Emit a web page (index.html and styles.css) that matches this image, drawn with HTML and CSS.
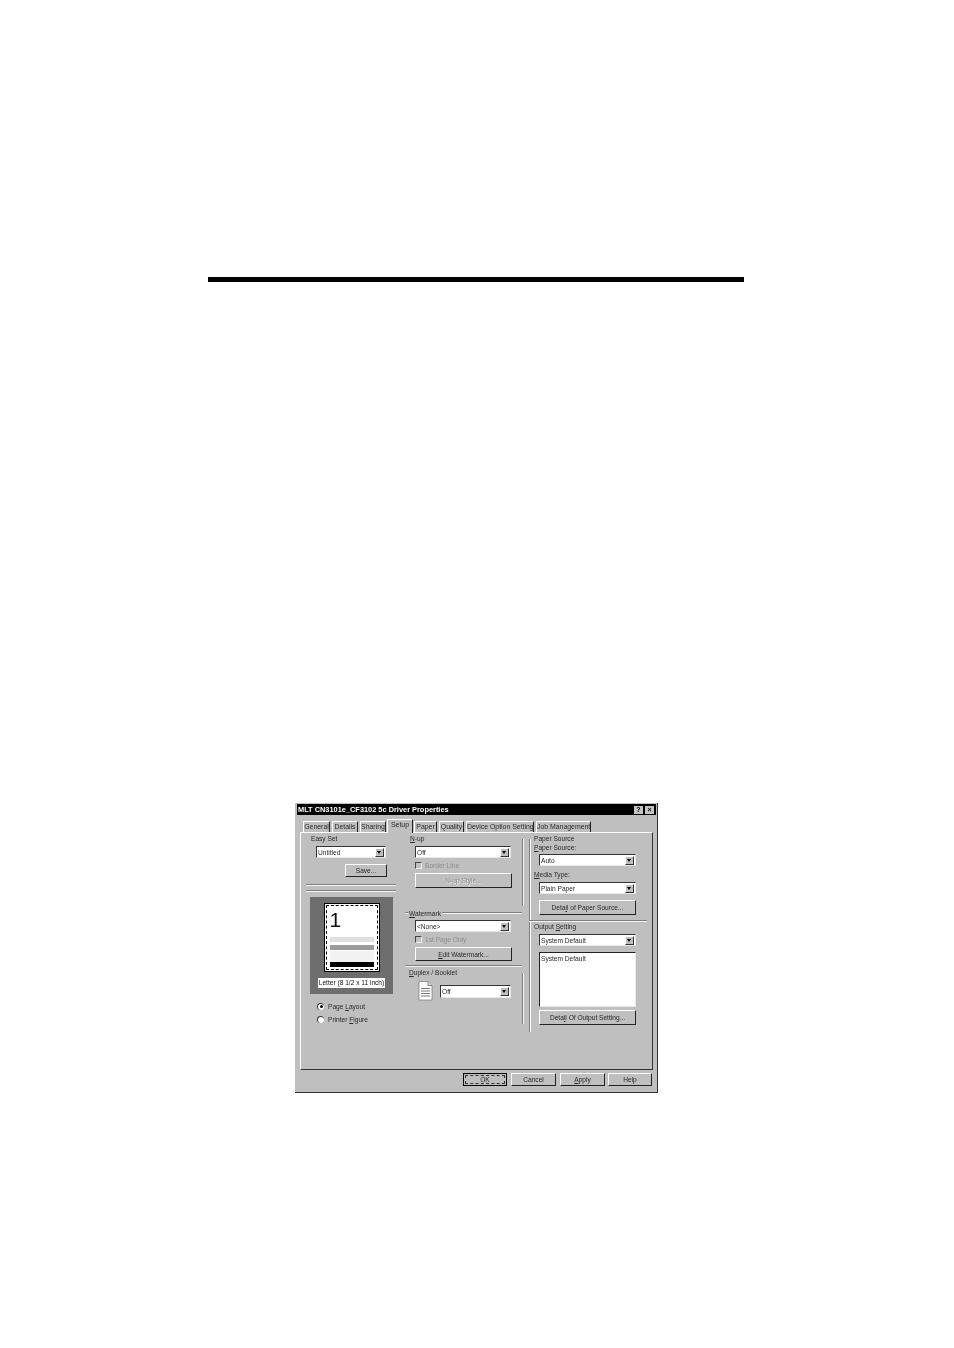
FILE: index.html
```html
<!DOCTYPE html>
<html lang="en">
<head>
<meta charset="utf-8">
<title>Driver Properties</title>
<link rel="stylesheet" href="styles.css">
</head>
<body>
<div class="rule"></div>
<div class="dialog">
  <div class="titlebar">
    <span class="title">MLT CN3101e_CF3102 5c Driver Properties</span>
    <span class="tbtn">?</span>
    <span class="tbtn tbtn-x">×</span>
  </div>
  <div class="tabs">
    <span class="tab w-general">General</span>
    <span class="tab w-details">Details</span>
    <span class="tab w-sharing">Sharing</span>
    <span class="tab active w-setup">Setup</span>
    <span class="tab w-paper">Paper</span>
    <span class="tab w-quality">Quality</span>
    <span class="tab w-device">Device Option Setting</span>
    <span class="tab w-job">Job Management</span>
  </div>
  <div class="panel">
    <div class="col-left">
      <div class="label">Easy Set</div>
      <div class="select s-easy"><span class="val">Untitled</span><span class="arrow"></span></div>
      <div class="btn b-save">Save...</div>
      <div class="groove g1"></div>
      <div class="groove g2"></div>
      <div class="preview">
        <div class="page">
          <div class="page-in">
            <span class="num">1</span>
            <i class="bar bar-a"></i>
            <i class="bar bar-b"></i>
            <i class="bar bar-c"></i>
            <i class="bar bar-d"></i>
          </div>
        </div>
        <div class="paperlabel">Letter (8 1/2 x 11 inch)</div>
      </div>
      <div class="radio r1"><span class="dot on"></span><span>Page <u>L</u>ayout</span></div>
      <div class="radio"><span class="dot"></span><span>Printer <u>F</u>igure</span></div>
    </div>
    <div class="col-mid">
      <div class="label"><u>N</u>-up</div>
      <div class="select s-mid"><span class="val">Off</span><span class="arrow"></span></div>
      <div class="check"><span class="box"></span><span>Border Line</span></div>
      <div class="btn b-mid dis">N-up Style...</div>
      <div class="groupline"><span><u>W</u>atermark</span></div>
      <div class="select s-mid s-after-group"><span class="val">&lt;None&gt;</span><span class="arrow"></span></div>
      <div class="check"><span class="box"></span><span>1st Page Only</span></div>
      <div class="btn b-edit"><span><u>E</u>dit Watermark...</span></div>
      <div class="groove g3"></div>
      <div class="label l-duplex"><u>D</u>uplex / Booklet</div>
      <div class="duplex">
        <svg class="docicon" width="15" height="20" viewBox="0 0 15 20">
          <path d="M1 .5H10L14 4.5V19H1Z" fill="#fff" stroke="#777" stroke-width=".7"/>
          <path d="M10 .5V4.5H14" fill="#ddd" stroke="#555" stroke-width=".7"/>
          <path d="M3 7.5H12M3 10H12M3 12.5H12M3 15H12" stroke="#555" stroke-width=".8"/>
        </svg>
        <div class="select s-dup"><span class="val">Off</span><span class="arrow"></span></div>
      </div>
    </div>
    <div class="col-lines">
      <div class="vline v1"></div>
      <div class="vline v2"></div>
    </div>
    <div class="col-right">
      <div class="rlabel">Paper Source</div>
      <div class="rlabel"><u>P</u>aper Source:</div>
      <div class="select s-right sp2"><span class="val">Auto</span><span class="arrow"></span></div>
      <div class="rlabel sp4"><u>M</u>edia Type:</div>
      <div class="select s-right"><span class="val">Plain Paper</span><span class="arrow"></span></div>
      <div class="btn b-right sp6"><span>Deta<u>i</u>l of Paper Source...</span></div>
      <div class="groove g4"></div>
      <div class="rlabel">Output <u>S</u>etting</div>
      <div class="select s-right"><span class="val">System Default</span><span class="arrow"></span></div>
      <div class="listbox">System Default</div>
      <div class="btn b-right sp3"><span>Deta<u>i</u>l Of Output Setting...</span></div>
    </div>
  </div>
  <div class="footer">
    <div class="btn fbtn ok"><span>OK</span></div>
    <div class="btn fbtn">Cancel</div>
    <div class="btn fbtn"><span><u>A</u>pply</span></div>
    <div class="btn fbtn help">Help</div>
  </div>
</div>
</body>
</html>
```
FILE: styles.css
```css
html, body { margin: 0; padding: 0; background: #fff; }
body { height: 1348px; overflow: hidden; font-family: "Liberation Sans", Arial, sans-serif; }

.rule { width: 536px; height: 5px; margin: 277px 0 0 208px; background: #000; }

.dialog {
  box-sizing: border-box;
  width: 363px; height: 290px;
  margin: 521px 0 0 295px;
  padding: 1px 1px 0 2px;
  background: #bfbfbf;
  border-right: 1px solid #333;
  border-bottom: 1px solid #333;
  font-size: 6.6px;
  line-height: 9px;
  color: #2a2a2a;
  filter: blur(.3px);
}
.dialog u { text-decoration: underline; }

.titlebar {
  display: flex; align-items: center; gap: 1px;
  height: 11px; width: 359px; padding: 0 2px 0 1px; box-sizing: border-box;
  background: #000; color: #fff;
}
.title { flex: 1; font-weight: bold; font-size: 7.4px; white-space: nowrap; }
.tbtn {
  width: 9px; height: 8px; background: #c4c4c4; color: #000;
  font-size: 7px; line-height: 8px; font-weight: bold; text-align: center;
}
.tbtn-x { margin-left: 1px; }

.tabs { display: flex; align-items: flex-end; height: 17px; padding-left: 6px; gap: 2px; box-sizing: border-box; }
.tab {
  box-sizing: border-box; height: 11px; text-align: center; line-height: 10px; white-space: nowrap;
  border-top: 1px solid #fff; border-left: 1px solid #fff; border-right: 1px solid #222;
  font-size: 6.9px;
}
.tab.active { height: 14px; line-height: 9px; background: #bfbfbf; margin: 0 -1px -1px -1px; position: relative; padding-bottom: 3px; }
.w-general { width: 27px; }
.w-details { width: 26px; }
.w-sharing { width: 26px; }
.w-setup { width: 26px; }
.w-paper { width: 23px; }
.w-quality { width: 25px; }
.w-device { width: 68px; }
.w-job { width: 55px; }

.panel {
  box-sizing: border-box;
  display: flex;
  width: 353px; height: 238px;
  margin-left: 3px;
  padding: 1px 0 0 5px;
  border-top: 1px solid #fff; border-left: 1px solid #fff;
  border-right: 1px solid #333; border-bottom: 1px solid #333;
}
.col-left { width: 99px; flex: none; }
.col-mid { width: 117px; flex: none; }
.col-lines { width: 7px; flex: none; }
.col-right { width: 118px; flex: none; padding-left: 5px; box-sizing: border-box;
  background:
    linear-gradient(#808080, #808080) 0 5px / 1px 193px no-repeat,
    linear-gradient(#fff, #fff) 1px 5px / 1px 193px no-repeat;
}

.label { height: 9px; margin-left: 5px; white-space: nowrap; }
.rlabel { height: 9px; white-space: nowrap; }
.l-duplex { margin: 1px 0 0 4px; }

.select {
  box-sizing: border-box; display: flex; align-items: center; justify-content: space-between;
  height: 12px; margin-top: 3px;
  background: #fff; padding: 0 1px 0 1px;
  border-top: 1px solid #333; border-left: 1px solid #333;
  border-right: 1px solid #e8e8e8; border-bottom: 1px solid #e8e8e8;
}
.val { white-space: nowrap; }
.arrow {
  box-sizing: border-box; position: relative; width: 9px; height: 9px; flex: none;
  background: #bfbfbf;
  border-top: 1px solid #fff; border-left: 1px solid #fff;
  border-right: 1px solid #333; border-bottom: 1px solid #333;
}
.arrow::after {
  content: ""; position: absolute; left: 1px; top: 2px;
  border-left: 2.5px solid transparent; border-right: 2.5px solid transparent; border-top: 3px solid #000;
}
.s-easy { width: 70px; margin-left: 10px; }
.s-mid { width: 96px; margin-left: 10px; }
.s-after-group { margin-top: 2px; }
.s-dup { width: 71px; height: 13px; margin-top: 4px; }
.s-right { width: 97px; margin-left: 5px; }
.sp2 { margin-top: 2px; }
.sp3 { margin-top: 3px; }
.sp4 { margin-top: 4px; }
.sp6 { margin-top: 6px; }

.btn {
  box-sizing: border-box; display: flex; align-items: center; justify-content: center; white-space: nowrap;
  background: #bfbfbf;
  border-top: 1px solid #fff; border-left: 1px solid #fff;
  border-right: 1px solid #222; border-bottom: 1px solid #222;
}
.b-save { width: 42px; height: 13px; margin: 6px 0 0 39px; }
.b-mid { width: 97px; height: 15px; margin: 3px 0 0 10px; }
.b-edit { width: 97px; height: 14px; margin: 3px 0 0 10px; }
.b-right { width: 97px; height: 15px; margin-left: 5px; }
.dis { color: #8e8e8e; text-shadow: .5px .5px 0 #eee; }

.groove { height: 2px; background: linear-gradient(#808080 50%, #f4f4f4 50%); }
.g1 { width: 90px; margin-top: 7px; }
.g2 { width: 90px; margin-top: 4px; }
.g3 { width: 117px; margin-top: 4px; }
.g4 { width: 118px; margin: 5px 0 0 -5px; }

.preview {
  display: flex; flex-direction: column; align-items: center;
  box-sizing: border-box; width: 83px; height: 97px; margin: 5px 0 0 4px; padding-top: 6px;
  background: #6e6e6e;
}
.page { box-sizing: border-box; width: 56px; height: 69px; padding: 1px; background: #fff; border: 1px solid #000; }
.page-in {
  box-sizing: border-box; display: flex; flex-direction: column; height: 100%;
  padding: 2px 3px 0; background: #fff; border: 1px dashed #000;
}
.num { height: 26px; font-size: 21px; line-height: 24px; color: #111; }
.bar { display: block; height: 5px; }
.bar-a { margin-top: 3px; background: #e0e0e0; }
.bar-b { margin-top: 3px; height: 5px; background: #9c9c9c; }
.bar-c { margin-top: 1px; height: 11px; background: #f2f2f2; }
.bar-d { margin-top: 0; background: #000; }
.paperlabel { margin-top: 6px; padding: 0 1px; height: 10px; line-height: 10px; background: #fff; color: #111; white-space: nowrap; font-size: 6.6px; }

.radio { display: flex; align-items: center; height: 12px; margin: 1px 0 0 11px; gap: 4px; white-space: nowrap; }
.r1 { margin-top: 6px; }
.dot {
  box-sizing: border-box; display: flex; align-items: center; justify-content: center;
  width: 7px; height: 7px; border-radius: 50%; background: #fff;
  border-top: 1px solid #333; border-left: 1px solid #333;
}
.dot.on::after { content: ""; width: 3px; height: 3px; border-radius: 50%; background: #000; }

.check { display: flex; align-items: center; gap: 3px; height: 10px; margin: 2px 0 0 10px; color: #8e8e8e; white-space: nowrap; }
.box { box-sizing: border-box; width: 7px; height: 7px; background: #bfbfbf; border-top: 1px solid #444; border-left: 1px solid #444; border-right: 1px solid #eee; border-bottom: 1px solid #eee; }

.groupline { display: flex; align-items: center; height: 10px; margin-top: 20px; gap: 1px; }
.groupline::before { content: ""; width: 3px; height: 2px; background: linear-gradient(#808080 50%, #f4f4f4 50%); }
.groupline::after { content: ""; flex: 1; height: 2px; background: linear-gradient(#808080 50%, #f4f4f4 50%); }

.duplex { display: flex; gap: 7px; margin: 4px 0 0 13px; }
.docicon { flex: none; }

.vline { width: 2px; background: linear-gradient(90deg, #808080 50%, #f4f4f4 50%); }
.v1 { height: 67px; margin-top: 5px; }
.v2 { height: 51px; margin-top: 67px; }

.listbox {
  box-sizing: border-box; width: 97px; height: 55px; margin: 6px 0 0 5px; padding: 1px 1px;
  background: #fff;
  border-top: 1px solid #222; border-left: 1px solid #222;
  border-right: 1px solid #e8e8e8; border-bottom: 1px solid #e8e8e8;
}

.footer { display: flex; justify-content: flex-end; gap: 4px; width: 352px; margin: 3px 0 0 3px; }
.fbtn { width: 45px; height: 13px; }
.help { width: 44px; margin-left: -1px; }
.ok { width: 44px; border: 1px solid #000; }
.ok span { box-sizing: border-box; width: 40px; height: 9px; line-height: 8px; text-align: center; border: 1px dashed #333; }
```
